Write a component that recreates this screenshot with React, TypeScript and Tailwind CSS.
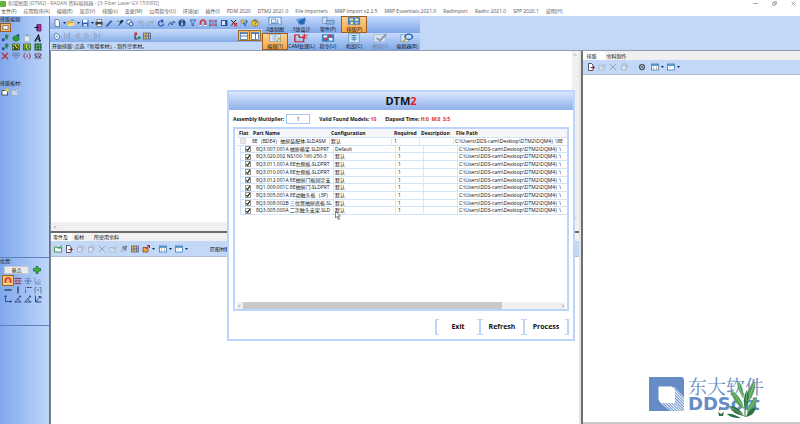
import React from 'react';

const icons: Record<string, React.ReactNode> = {
  file: <path d="M4 1h6l3 4v10H4z" fill="#fff" stroke="#44618f" strokeWidth="1.5" />,
  folder: (
    <>
      <path d="M1 4h5l2 2h6v8H1z" fill="#e9a92d" />
      <path d="M4 8h12l-3 6H1z" fill="#ffdf7d" />
      <path d="M8 3c3-2 5-1 6 1" fill="none" stroke="#3a67b8" strokeWidth="1.5" />
    </>
  ),
  save: (
    <>
      <rect x="2" y="2" width="13" height="13" fill="#3563b3" />
      <rect x="4" y="2" width="9" height="5" fill="#fff" />
      <rect x="5" y="10" width="7" height="5" fill="#c9dcf7" />
    </>
  ),
  print: (
    <>
      <path d="M4 1h9v5H4z" fill="#fff" stroke="#333" />
      <rect x="1" y="6" width="14" height="6" rx="1" fill="#43474f" />
      <path d="M4 10h9v5H4z" fill="#f4f4f4" stroke="#333" />
    </>
  ),
  pencil: <path d="M2 14L12 3l2 2L4 15z" fill="#2f6fc1" stroke="#1d3f7a" />,
  brush: (
    <>
      <path d="M3 15l5-8 3 2z" fill="#1f5bb5" />
      <path d="M7 6c3-5 6-4 8-4-1 4-3 7-6 7z" fill="#2c3440" />
      <path d="M2 4l5 1" stroke="#2fa38c" strokeWidth="2" />
    </>
  ),
  copy: (
    <>
      <path d="M2 2h7l2 2v6H2z" fill="#fff" stroke="#2c5aa8" strokeWidth="1.5" />
      <circle cx="10" cy="10" r="4" fill="#cfe2ff" stroke="#2c5aa8" strokeWidth="2" />
    </>
  ),
  undo: <path d="M4 3v5h5M4 8c4-5 10-3 10 2 0 2-2 4-4 4" fill="none" stroke="#93a4bf" strokeWidth="2" />,
  redo: <path d="M12 3v5H7M12 8C8 3 2 5 2 10c0 2 2 4 4 4" fill="none" stroke="#93a4bf" strokeWidth="2" />,
  refresh: <path d="M13 9a5 5 0 1 1-5-5h3M9 1l3 3-3 3" fill="none" stroke="#1d57b0" strokeWidth="2.4" />,
  curve: <path d="M1 13c3-8 5-8 6-3s3 0 3-5l5 2" fill="none" stroke="#24528f" strokeWidth="2" />,
  info: (
    <>
      <circle cx="8" cy="8" r="7" fill="#1e4e92" />
      <path d="M8 7v6M8 3v2" stroke="#fff" strokeWidth="2.5" />
    </>
  ),
  filter: <path d="M2 2h12l-5 6v6l-3-2V8z" fill="#9dc0f0" stroke="#244f95" strokeWidth="1.5" />,
  magnet: (
    <>
      <path d="M3 13V7a5 5 0 0 1 10 0v6" fill="none" stroke="#d2323c" strokeWidth="3.4" />
      <path d="M1 13h4M11 13h4" stroke="#fff" strokeWidth="2" />
    </>
  ),
  dims: (
    <>
      <path d="M1 4h14M1 12h14" stroke="#d0323c" strokeWidth="2" />
      <path d="M2 1v14M14 1v14M5 8h6" stroke="#1f4e9b" strokeWidth="1.5" />
    </>
  ),
  panel: (
    <>
      <rect x="2" y="2" width="13" height="12" fill="#215ba8" />
      <rect x="4" y="4" width="6" height="8" fill="#d5e7fb" />
    </>
  ),
  figure: (
    <>
      <path d="M2 2l5 5-4 6M7 7l5-5" stroke="#222" strokeWidth="2" fill="none" />
      <path d="M8 8l6 6M14 8l-6 6" stroke="#d4262f" strokeWidth="2.4" />
    </>
  ),
  key: (
    <>
      <circle cx="5" cy="5" r="3.5" fill="#f2c43b" stroke="#7d6415" />
      <path d="M7 8l5 6M11 2l3 3-3 4" stroke="#2b5eb3" strokeWidth="2.5" fill="none" />
    </>
  ),
  help: (
    <>
      <circle cx="8" cy="8" r="7" fill="#f6cf3b" stroke="#6b5c1c" />
      <path d="M5 6c0-4 6-4 6 0 0 2-3 2-3 4M8 11v2" fill="none" stroke="#27488e" strokeWidth="2" />
    </>
  ),
  hand: (
    <>
      <path d="M3 4l3-2 7 5v5l-4 3H6L2 9z" fill="#e6eefb" stroke="#4b6c9f" strokeWidth="1.5" />
      <path d="M5 7l5 4" stroke="#4b6c9f" strokeWidth="1.5" />
    </>
  ),
  first: <path d="M3 2v12M13 2L6 8l7 6z" fill="#a9b9d2" stroke="#8e9fbc" strokeWidth="1.5" />,
  prev: <path d="M12 2L4 8l8 6z" fill="#a9b9d2" stroke="#8e9fbc" />,
  next: <path d="M4 2l8 6-8 6z" fill="#a9b9d2" stroke="#8e9fbc" />,
  last: <path d="M13 2v12M3 2l7 6-7 6z" fill="#a9b9d2" stroke="#8e9fbc" strokeWidth="1.5" />,
  nest: (
    <>
      <path d="M3 1h5v5H3z" fill="#c2272d" />
      <path d="M4 6v8h5" stroke="#222" strokeWidth="2" fill="none" />
      <path d="M9 9h6v5H9z" fill="#2e8b3d" />
    </>
  ),
  grid: (
    <>
      <rect x="1" y="2" width="14" height="12" fill="#f3b94c" stroke="#5a5a70" strokeWidth="1.5" />
      <path d="M6 2v12M11 2v12M1 8h14" stroke="#3a64ab" strokeWidth="1.5" />
    </>
  ),
  rows: (
    <>
      <rect x="1" y="1" width="14" height="14" fill="#fff" stroke="#4d78b4" strokeWidth="1.6" />
      <path d="M1 8h14M1 3h14" stroke="#4d78b4" strokeWidth="2" />
    </>
  ),
  cols: (
    <>
      <rect x="1" y="1" width="14" height="14" fill="#fff" stroke="#4d78b4" strokeWidth="1.6" />
      <path d="M9 1v14M1 3h14" stroke="#4d78b4" strokeWidth="2" />
    </>
  ),
  sheet: <rect x="2" y="4" width="12" height="8" fill="#fff" stroke="#5a6a88" strokeWidth="2" />,
  exit: (
    <>
      <path d="M6 1h8v13H6z" fill="#c026b0" stroke="#3c2440" strokeWidth="1.5" />
      <path d="M1 7h7M5 4l4 3-4 4" stroke="#111" strokeWidth="2" fill="none" />
    </>
  ),
  part: (
    <>
      <path d="M9 2h5v5H9z" fill="#2f9c43" stroke="#24542d" />
      <path d="M2 9h5v5H2z" fill="#2a3f8f" />
      <path d="M7 10l5-2v4" stroke="#2f9c43" strokeWidth="2" fill="none" />
    </>
  ),
  cube: (
    <>
      <path d="M2 6l6-3 6 3v6l-6 3-6-3z" fill="#24a03a" stroke="#135b22" />
      <path d="M9 2l5-1v4" fill="#1d2e8a" stroke="#1d2e8a" />
    </>
  ),
  paste: (
    <>
      <rect x="2" y="2" width="12" height="13" rx="1" fill="#aebdd4" />
      <rect x="4" y="5" width="8" height="9" fill="#e6ecf5" />
      <rect x="5" y="1" width="6" height="3" fill="#8897b0" />
    </>
  ),
  letter: <path d="M2 14L9 2l3 12M5 10h6M1 14h4M9 14h5" fill="none" stroke="#111" strokeWidth="2.2" />,
  array: (
    <>
      <rect x="1" y="2" width="14" height="12" fill="#d5dd3a" stroke="#2c4a22" strokeWidth="1.5" />
      <path d="M3 5l4 5M9 4l4 5M3 12h10" stroke="#17351d" strokeWidth="2.6" />
    </>
  ),
  array2: (
    <>
      <rect x="1" y="2" width="14" height="12" fill="#d5dd3a" stroke="#2c4a22" strokeWidth="1.5" />
      <path d="M4 4v8h4M12 4L9 7l4 5" stroke="#1b6f35" strokeWidth="2.6" fill="none" />
    </>
  ),
  mesh: (
    <>
      <rect x="1" y="1" width="14" height="14" fill="#145226" />
      <path d="M1 5.5h14M1 10.5h14M5.5 1v14M10.5 1v14" stroke="#8ed39c" strokeWidth="1.2" />
    </>
  ),
  cross: <path d="M2 2l12 12M14 2L2 14" stroke="#c1272d" strokeWidth="2.4" />,
  link: (
    <g fill="none" stroke="#5f7191" strokeWidth="1.8">
      <circle cx="4" cy="5" r="3" />
      <circle cx="12" cy="5" r="3" />
      <path d="M5 9l3 4 3-4" />
    </g>
  ),
  rotate: (
    <g fill="none" strokeWidth="2">
      <path d="M5 2a7 7 0 0 0 0 12" stroke="#c1272d" />
      <path d="M11 14a7 7 0 0 0 0-12" stroke="#c1272d" />
      <path d="M8 5v6" stroke="#1d3b87" strokeDasharray="2 1" />
    </g>
  ),
  mirror: (
    <g fill="none" strokeWidth="1.6">
      <path d="M8 1v14" stroke="#c1272d" />
      <path d="M6 4H2v4h3v4H1M10 4h4v4h-3v4h4" stroke="#2d3e62" />
    </g>
  ),
  newSheet: (
    <>
      <rect x="2" y="5" width="11" height="9" fill="#fff" stroke="#4c5c78" strokeWidth="2" />
      <path d="M12 1v7M8 4h8" stroke="#e7d22c" strokeWidth="3" />
    </>
  ),
  graySheet: (
    <>
      <rect x="2" y="5" width="11" height="9" fill="#dde5f0" stroke="#a3b2c8" strokeWidth="1.5" />
      <path d="M6 9l7-7 2 2-6 7" fill="#c6d1e1" stroke="#9aabc4" />
    </>
  ),
  plus: <path d="M6 1h4v4h5v5h-5v5H6v-5H1V5h5z" fill="#3bb44c" stroke="#176a2a" strokeWidth="1.5" />,
  snapGrid: (
    <>
      <path d="M1 3h14M1 8h14M1 13h14" stroke="#b3373f" strokeWidth="2" />
      <path d="M4 1v14M10 1v14" stroke="#6d4f80" strokeWidth="1.2" />
    </>
  ),
  snapCross: <path d="M8 1v14M1 8h14M3 3h2M11 3h2M3 13h2M11 13h2" stroke="#3f5f9d" strokeWidth="1.6" />,
  snapAngle: <path d="M2 1v13h13M4 12L13 3M6 13l8-5" stroke="#6c84b0" strokeWidth="1.4" fill="none" />,
  hline: <path d="M1 8h14" stroke="#1d2b4a" strokeWidth="2.4" />,
  vline: <path d="M8 1v14" stroke="#1d2b4a" strokeWidth="2.4" />,
  corner: (
    <>
      <path d="M6 3h9" stroke="#26354f" strokeWidth="1.8" strokeDasharray="4 1" />
      <path d="M3 2v3M3 7v7" stroke="#2b9c40" strokeWidth="2" />
    </>
  ),
  brackets: (
    <>
      <path d="M5 3H2v12M11 3h3v12" stroke="#516489" strokeWidth="1.6" fill="none" />
      <path d="M8 6v4" stroke="#2b9c40" strokeWidth="2.4" />
    </>
  ),
  axis: <path d="M3 1v12h12M1 4l2-3 2 3M12 11l3 2-3 2" stroke="#23407c" strokeWidth="1.7" fill="none" />,
  angle: <path d="M1 14h14M2 14L12 2M8 7l4 7M10 2h3v3" stroke="#23407c" strokeWidth="1.7" fill="none" />,
  angle2: <path d="M3 1v13h12M3 14L13 3M9 3h5v4" stroke="#23407c" strokeWidth="1.9" fill="none" />,
  addPart: (
    <>
      <path d="M1 4h5l1 2h8v8H1z" fill="#fff" stroke="#32884a" strokeWidth="1.8" />
      <path d="M8 5h6V1" stroke="#3aa655" strokeWidth="2.5" fill="none" />
    </>
  ),
  exportDoc: (
    <>
      <path d="M3 1h6l3 3v11H3z" fill="#fff" stroke="#2e3440" strokeWidth="1.6" />
      <path d="M7 9h8M12 6l3 3-3 3" stroke="#a61c28" strokeWidth="2" fill="none" />
    </>
  ),
  grayDoc: <path d="M3 5h9v9H3zM5 2h9v8" fill="#dbe3ee" stroke="#9eacc0" strokeWidth="1.6" />,
  grayX: <path d="M2 2l12 12M14 2L2 14" stroke="#98a3b4" strokeWidth="2" />,
  pin: <path d="M2 14l4-5M5 6l6 6 2-8 1-2-8 1z" fill="#8490a3" stroke="#707c90" strokeWidth="1.5" />,
  bucket: (
    <>
      <path d="M2 5h10v9H2z" fill="#efa73c" stroke="#694319" strokeWidth="1.5" />
      <path d="M8 8l6-6M10 1h5v5" stroke="#b2222b" strokeWidth="2" fill="none" />
    </>
  ),
  table: (
    <>
      <rect x="1" y="2" width="14" height="12" fill="#fff" stroke="#3980bd" strokeWidth="1.6" />
      <path d="M1 4h14" stroke="#3980bd" strokeWidth="3" />
      <path d="M5 7v5M11 7v5" stroke="#d9853c" strokeWidth="1.8" strokeDasharray="2 1" />
    </>
  ),
  windowPane: (
    <>
      <rect x="1" y="2" width="14" height="12" fill="#fff" stroke="#3980bd" strokeWidth="1.6" />
      <path d="M1 4h14" stroke="#3980bd" strokeWidth="3" />
      <path d="M4 8h3" stroke="#7a9cc0" strokeWidth="1.5" />
    </>
  ),
  gear: (
    <>
      <circle cx="8" cy="8" r="5" fill="#cdd6e6" stroke="#4b5468" strokeWidth="2.5" />
      <path d="M4 4l8 8M12 4l-8 8" stroke="#4b5468" strokeWidth="1.3" />
    </>
  ),
  drawing: (
    <>
      <rect x="1" y="2" width="14" height="12" fill="#eaf4ff" stroke="#5a90c0" strokeWidth="1.2" />
      <path d="M4 5h5v6H4zM11 5v7M3 12h10" fill="none" stroke="#4a86bb" />
    </>
  ),
  model: (
    <>
      <path d="M1 6l7-3 7 4-7 4z" fill="#5aa0de" />
      <path d="M4 9l9-7-1 11-5 1z" fill="#2a68b1" />
    </>
  ),
  plates: (
    <>
      <path d="M2 2h5v10H2z" fill="#d5e5f5" stroke="#6c91bb" />
      <path d="M6 7h9v6H6z" fill="#8fb7e2" stroke="#4d7dae" />
    </>
  ),
  nesting: (
    <>
      <rect x="1" y="2" width="14" height="12" fill="#3c82c4" />
      <path d="M3 4h4v3H3zM9 4h4v4H9zM4 9h3v4H4zM9 10h4v2H9z" fill="#f3e2a0" />
    </>
  ),
  edit: (
    <>
      <rect x="2" y="2" width="12" height="12" fill="#f7fbff" stroke="#7095b9" />
      <path d="M4 5h8M4 8h8M4 11h5M8 3v10" stroke="#7aa6cf" />
      <path d="M10 13l4-6" stroke="#d7a430" strokeWidth="2" />
    </>
  ),
  cam: (
    <>
      <path d="M1 14V3h5v4h5v7z" fill="none" stroke="#cc2630" strokeWidth="1.6" />
      <path d="M9 6l7-3M10 2l5 7M12 1v9" stroke="#cc2630" strokeWidth="1.1" />
    </>
  ),
  order: (
    <>
      <rect x="1" y="2" width="14" height="12" fill="#3c82c4" />
      <path d="M3 4h4v3H3zM9 8h4v4H9z" fill="#fff" />
      <path d="M8 4l4 2M4 12l3-4" stroke="#e03038" strokeWidth="2.4" />
    </>
  ),
  machine: (
    <>
      <rect x="2" y="1" width="12" height="14" fill="#cfe6f8" stroke="#6d9cc4" />
      <path d="M5 4h6M5 7h6M5 10h6M8 3v10" stroke="#4c8abc" strokeWidth="1.3" />
    </>
  ),
  check: (
    <>
      <rect x="1" y="2" width="13" height="12" fill="#dae3ef" stroke="#a8b6ca" />
      <path d="M4 8l4 4 7-10" stroke="#8796ad" strokeWidth="2.4" fill="none" />
    </>
  ),
  search: (
    <>
      <rect x="1" y="3" width="9" height="11" fill="#d6e8fb" stroke="#7299c4" />
      <circle cx="10" cy="6" r="4.2" fill="#bfe2ff" stroke="#2561aa" strokeWidth="1.8" />
      <path d="M7 9l-4 5" stroke="#d9a62c" strokeWidth="2.4" />
    </>
  ),
};

const Icon: React.FC<{ name: string; className?: string }> = ({ name, className = 'size-2' }) => (
  <svg viewBox="0 0 16 16" preserveAspectRatio="none" aria-hidden="true" className={`shrink-0 ${className}`}>
    {icons[name]}
  </svg>
);

const Caret = () => (
  <svg viewBox="0 0 6 4" aria-hidden="true" className="w-[3px] h-[2px] shrink-0">
    <path d="M0 0h6L3 4z" fill="#1b2a49" />
  </svg>
);

const ToolButton: React.FC<{ name: string; active?: boolean; caret?: boolean }> = ({ name, active, caret }) => (
  <button
    aria-label={name}
    className={`flex items-center justify-center h-[9px] shrink-0 ${caret ? 'gap-[2px] w-[14px]' : 'w-[10px]'} ${
      active ? 'bg-[#fbc066] outline outline-1 outline-[#9a6a2b]' : ''
    }`}
  >
    <Icon name={name} />
    {caret && <Caret />}
  </button>
);

const menus = [
  '文件(F)', '应用程序(A)', '编辑(E)', '显示(V)', '排版(s)', '变更(M)', '公用指令(U)', '环境(g)', '插件(I)',
  'PDM 2020', 'DTM2 2021.0', 'File Importers', 'MRP Import v2.2.5', 'MRP Essentials 2021.0', 'Radimport',
  'Radnc 2021.0', 'SPP 2020.1', '说明(H)',
];

const mainTools = [
  'print', 'pencil', 'brush', 'copy', 'undo', 'redo', 'refresh', 'curve', 'info', 'filter', 'magnet',
  'dims', 'panel', 'figure', 'key', 'help',
];

const modes = [
  [
    { icon: 'drawing', label: '2维制图' },
    { icon: 'model', label: '3维设计' },
    { icon: 'plates', label: '零件(P)' },
    { icon: 'nesting', label: '排版(P)', active: true },
  ],
  [
    { icon: 'edit', label: '编辑(1)', active: true },
    { icon: 'cam', label: 'CAM处理(L)' },
    { icon: 'order', label: '指令(U)' },
    { icon: 'machine', label: '机组(C)' },
    { icon: 'check', label: '模拟(V)', disabled: true },
    { icon: 'search', label: '编辑器(B)' },
  ],
];

const editTools = ['part', 'cube', 'paste', 'letter', 'part', 'array', 'array2', 'mesh', 'cross', 'link', 'rotate', 'mirror'];
const snapTools = ['magnet', 'snapGrid', 'snapCross', 'snapAngle', 'hline', 'vline', 'corner', 'brackets', 'axis', 'angle', 'angle', 'angle2'];
const partTools = ['addPart', 'exportDoc', 'grayDoc', 'grayDoc', 'grayX', 'graySheet', 'pin', 'grid'];

const parts = [
  { name: '8Q3.007.001A 抽屉横梁.SLDPRT', config: 'Default' },
  { name: '8Q3.020.002 NS100-160-250-3', config: '默认' },
  { name: '8Q3.011.001A 8E右侧板.SLDPRT', config: '默认' },
  { name: '8Q3.010.001A 8E左侧板.SLDPRT', config: '默认' },
  { name: '8Q3.012.001A 8E抽屉门板固定支', config: '默认' },
  { name: '8Q1.009.001C 8E抽屉门.SLDPRT', config: '默认' },
  { name: '8Q3.005.001A 8E动触头板（3P）', config: '默认' },
  { name: '8Q3.008.002B 三位置抽屉底板.SL', config: '默认' },
  { name: '8Q3.005.000A 二次触头支架.SLD', config: '默认' },
];

const TitleBar = () => (
  <header className="bg-white shrink-0">
    <div className="flex items-center justify-between h-[7px] pr-1">
      <div className="flex items-center gap-[2px] text-[5px] leading-[7px] text-[#777]">
        <span className="size-[6px] bg-[#63b33b] rounded-[1px]" />
        <h1>新增图面 (DTM2) - RADAN 资料编辑器 - [3: Fiber Laser GY-1530FD]</h1>
      </div>
      <div className="flex items-center gap-[14px]">
        {['M0 4h8', 'M1 3h4v4H1zM3 3V1h4v4H5', 'M1 1l6 6M7 1L1 7'].map((d, i) => (
          <button key={d} aria-label={['Minimize', 'Restore', 'Close'][i]}>
            <svg viewBox="0 0 8 8" className="block size-[5px]">
              <path d={d} fill="none" stroke="#777" strokeWidth="1" />
            </svg>
          </button>
        ))}
      </div>
    </div>
    <nav className="flex items-center gap-[7px] h-[9px] pl-px text-[5px] leading-[9px] text-[#555] whitespace-nowrap">
      {menus.map((m) => (
        <button key={m}>{m}</button>
      ))}
    </nav>
  </header>
);

const Toolbars = () => (
  <div className="flex h-[34px] shrink-0 bg-[#c3d7f7]">
    <div className="w-[212px] flex flex-col">
      <div className="flex items-center h-[13px] pl-[2px] bg-linear-to-b from-[#c9dcfa] to-[#86ade9]">
        <ToolButton name="file" caret />
        <ToolButton name="folder" caret />
        <ToolButton name="save" caret />
        <div className="flex flex-1 justify-between pr-[2px]">
          {mainTools.map((t) => (
            <ToolButton key={t} name={t} />
          ))}
        </div>
      </div>
      <div className="flex items-center h-[13px] px-[2px] bg-linear-to-b from-[#c9dcfa] to-[#86ade9]">
        {['hand', 'first', 'prev', 'next', 'last'].map((t) => (
          <ToolButton key={t} name={t} />
        ))}
        <div className="flex ml-[30px]">
          <ToolButton name="nest" />
          <ToolButton name="grid" />
        </div>
        <div className="flex gap-px ml-auto">
          <ToolButton name="rows" active />
          <ToolButton name="cols" active />
        </div>
      </div>
      <p className="h-2 pl-[2px] text-[5px] leading-[8px] text-[#111] whitespace-nowrap">
        开始排版: 点选「新增素材」, 制作空素材。
      </p>
    </div>
    <div className="w-[158px] flex flex-col">
      {modes.map((row, i) => (
        <div key={i} className="grid grid-cols-6 h-[17px] bg-linear-to-b from-[#c6dafb] to-[#7ea7e8]">
          {row.map((m) => (
            <button
              key={m.label}
              disabled={m.disabled}
              className={`flex flex-col items-center text-[5px] leading-[6px] whitespace-nowrap ${
                m.active ? 'bg-linear-to-b from-[#fdd493] to-[#f6a342] outline outline-1 -outline-offset-1 outline-[#9a5f24]' : ''
              } ${m.disabled ? 'text-[#6f7f99]' : 'text-[#111]'}`}
            >
              <Icon name={m.icon} className="w-[14px] h-[10px]" />
              {m.label}
            </button>
          ))}
        </div>
      ))}
    </div>
  </div>
);

const LeftBar = () => (
  <aside className="w-[50px] shrink-0 flex flex-col border-r border-[#5f7391] bg-linear-to-r from-[#7fa8ec] to-[#c0d6fa] text-[5px] leading-[7px] text-[#111]">
    <section className="h-16">
      <h2>排版编辑:</h2>
      <div className="flex justify-between pr-[6px] mb-px">
        <button aria-label="sheet" className="flex items-center justify-center w-[11px] h-[9px] bg-[#fbb95c] border border-[#9a5f24]">
          <Icon name="sheet" className="size-[7px]" />
        </button>
        <ToolButton name="exit" />
      </div>
      <div className="grid grid-cols-4 w-11">
        {editTools.map((t, i) => (
          <ToolButton key={i} name={t} />
        ))}
      </div>
    </section>
    <section className="flex-1">
      <h2>排版板材:</h2>
      <div className="flex">
        <ToolButton name="newSheet" />
        <ToolButton name="graySheet" />
      </div>
    </section>
    <section className="h-[69px] border-y border-[#5c81bf]">
      <h2>位置:</h2>
      <div className="flex items-center justify-between pl-1 pr-[7px] mb-[2px]">
        <button className="w-[25px] h-2 bg-[#e9eaec] border border-[#c3c8d0] leading-[6px]">基点</button>
        <ToolButton name="plus" />
      </div>
      <div className="grid grid-cols-4 w-10 ml-[3px]">
        {snapTools.map((t, i) => (
          <ToolButton key={i} name={t} active={i === 0} />
        ))}
      </div>
    </section>
    <div className="h-[98px]" />
  </aside>
);

const Scroller: React.FC<{ d: string }> = ({ d }) => (
  <svg viewBox="0 0 6 6" aria-hidden="true" className="size-1 shrink-0">
    <path d={d} fill="none" stroke="#8a8a8a" strokeWidth="1.2" />
  </svg>
);

const Workspace = () => (
  <main className="flex-1 min-w-0 flex flex-col border-l border-[#7b8798]">
    <div className="flex h-[171px] shrink-0">
      <div className="flex-1 bg-white" />
      <div className="w-[7px] flex flex-col items-center justify-between py-[2px] bg-[#f0f0f0]">
        <Scroller d="M1 4l2-2 2 2" />
        <Scroller d="M1 2l2 2 2-2" />
      </div>
    </div>
    <div className="flex items-center h-[9px] pl-[2px] bg-[#f0f0f0] shrink-0">
      <Scroller d="M4 1L2 3l2 2" />
    </div>
    <div className="flex items-end h-[10px] border-t-2 border-[#6a6a6a] bg-[#f0f0f0] text-[5px] leading-[8px] text-[#111] shrink-0" role="tablist">
      <button role="tab" aria-selected="true" className="px-[2px] w-[21px] text-left bg-white whitespace-nowrap">零件及</button>
      <button role="tab" className="w-5 text-left pl-[2px]">板材</button>
      <button role="tab" className="px-[2px]">所使用余料</button>
    </div>
    <div className="flex items-center h-4 pl-[2px] bg-[#c3d7f7] border-b border-[#b3c0d4] shrink-0">
      <div className="flex gap-px mr-px">
        {partTools.map((t, i) => (
          <ToolButton key={i} name={t} />
        ))}
      </div>
      <div className="flex">
        <ToolButton name="bucket" caret />
        <div className="flex gap-[2px] ml-[3px]">
          <ToolButton name="table" caret />
          <ToolButton name="windowPane" caret />
        </div>
      </div>
      <span className="ml-[22px] text-[5px] leading-[8px] text-[#111]">匹配材料</span>
    </div>
    <div className="flex-1 bg-white" />
  </main>
);

const Watermark = () => (
  <div className="flex items-center gap-1 text-[#668cc6]">
    <svg viewBox="0 0 70 68" className="w-[35px] h-[34px]">
      <defs>
        <pattern id="hatch" width="4" height="4" patternUnits="userSpaceOnUse" patternTransform="rotate(-45)">
          <rect width="2" height="4" fill="#fff" />
        </pattern>
      </defs>
      <path d="M0 0h64q6 0 6 6v62H0z" fill="#668cc6" />
      <path d="M50 20l20 20v28H42L20 50z" fill="url(#hatch)" />
      <path d="M19 19h26q6 2 7 8v25H27q-7-2-8-8z" fill="#fff" />
    </svg>
    <div className="relative">
      <p className="font-['Noto_Serif_CJK_SC','Liberation_Serif','Noto_Sans_CJK_SC',serif] text-[19px] leading-[20px]">东大软件</p>
      <p className="font-['DejaVu_Sans',sans-serif] font-bold text-[18px] leading-[16px]">DDSoft</p>
      <svg viewBox="0 0 90 78" aria-hidden="true" className="absolute right-1 -bottom-[6px] w-[45px] h-[39px]">
        <g fill="#55a05c">
          <path d="M58 60C54 42 46 30 32 22c2 16 10 30 26 38z" />
          <path d="M57 40C48 26 44 14 44 2c10 8 14 22 13 38z" />
          <path d="M64 48C62 30 68 14 80 4c2 16-4 32-16 44z" />
          <path d="M64 68c2-16 8-26 20-32 0 14-8 26-20 32z" />
        </g>
        <g fill="#2c7142">
          <path d="M58 74C50 60 40 54 28 54c6 12 16 18 30 20z" />
          <path d="M60 60c-4-16-2-28 4-38 6 12 4 26-4 38z" />
          <path d="M62 76c4-12 10-18 20-20-2 12-10 18-20 20z" />
          <path d="M52 78C42 74 36 68 24 70c6 6 16 9 28 8z" />
          <path d="M6 66l6 4 6-4-2 8H8zM8 58l4 3-4 2z" />
        </g>
        <path d="M34 24l22 32M46 6l10 32M79 8L66 44M64 26l-3 30M82 40L66 64M30 56l26 16" stroke="#a9d39a" strokeWidth="1.2" fill="none" />
        <path d="M60 76V42" stroke="#2c7142" strokeWidth="2" />
      </svg>
    </div>
  </div>
);

const RightPane = () => (
  <aside className="w-[29%] shrink-0 flex flex-col bg-white border-b-2 border-[#c8c8c8]">
    <div className="flex items-end h-[9px] bg-[#f0f0f0] text-[5px] leading-[8px] text-[#111]" role="tablist">
      <button role="tab" aria-selected="true" className="w-[22px] h-full pl-1 text-left bg-white">排版</button>
      <button role="tab" className="px-[2px]">余料制作</button>
    </div>
    <div className="flex items-center h-[15px] pl-[3px] bg-[#c3d7f7] border-b border-[#b3c0d4]">
      <div className="flex gap-px">
        <ToolButton name="exportDoc" />
        <ToolButton name="graySheet" />
        <ToolButton name="grayX" />
        <ToolButton name="grayDoc" />
      </div>
      <div className="flex gap-[2px] ml-2">
        <ToolButton name="gear" />
        <div className="flex gap-[2px] ml-[2px]">
          <ToolButton name="table" caret />
          <ToolButton name="windowPane" caret />
        </div>
      </div>
    </div>
    <div className="flex-1 flex items-end justify-end pr-9 pb-[10px]">
      <Watermark />
    </div>
  </aside>
);

const cell = 'shrink-0 overflow-hidden border-r border-[#dbe8f5]';

const PartRow: React.FC<{ name: string; config: string; parent?: boolean }> = ({ name, config, parent }) => (
  <tr className={`flex flex-1 min-h-0 items-stretch border-b border-[#d3e4f5] ${parent ? '' : 'ml-[3px] border-l'}`}>
    <td className={`w-[14px] flex items-center justify-center shrink-0 ${parent ? 'pr-[2px]' : ''}`}>
      <input
        type="checkbox"
        aria-label={name}
        defaultChecked={!parent}
        disabled={parent}
        className="peer appearance-none size-[6px] border border-[#999] bg-white disabled:border-[#ddd] disabled:bg-[#e6e6e6]"
      />
      <svg viewBox="0 0 8 8" aria-hidden="true" className="hidden peer-checked:block size-[6px] -ml-[6px] pointer-events-none">
        <path d="M1.5 4l2 2 3-4.500" fill="none" stroke="#111" strokeWidth="1.4" />
      </svg>
    </td>
    <td className={`w-[79px] pl-px ${cell}`}>{name}</td>
    <td className={`w-[62px] pl-px ${cell}`}>{config}</td>
    <td className={`w-7 pl-[2px] ${cell}`}>1</td>
    <td className={`w-[34px] ${cell}`} />
    <td className="pl-px whitespace-pre">
      {'C:\\Users\\DDS-cam\\Desktop\\DTM2\\DQM4)  \\'}
      {parent && '8E'}
    </td>
  </tr>
);

const DialogButton: React.FC<{ label: string }> = ({ label }) => (
  <button className="flex justify-between items-center w-[46px] h-4 -ml-[2px] text-[7px] font-bold text-[#111]">
    <span className="w-1 h-full border-y border-l-2 border-[#bdd5fa]" />
    {label}
    <span className="w-1 h-full border-y border-r-2 border-[#bdd5fa]" />
  </button>
);

const DtmDialog = () => (
  <div className="absolute inset-0 flex items-center justify-center pt-[7px] pl-[2px]">
    <section role="dialog" aria-labelledby="dtm-title" className="relative w-[348px] bg-white border-2 border-[#bdd5fa] text-[#111]">
      <h2 id="dtm-title" className="h-[18px] text-center text-[11px] leading-[17px] font-bold bg-linear-to-b from-[#d9e6fb] to-[#8fb0e9]">
        DTM<span className="text-[#f01c24]">2</span>
      </h2>
      <div className="text-[5px]">
        <div className="flex items-center gap-[9px] h-[17px] pl-1 leading-[8px] font-bold whitespace-nowrap">
          <div className="flex items-center gap-[2px]">
            <label htmlFor="multiplier">Assembly Multiplier:</label>
            <input id="multiplier" defaultValue="1" className="w-6 h-[10px] border border-[#a9c9f5] text-center font-normal" />
          </div>
          <span>
            Valid Found Models: <span className="text-[#e0262c]">10</span>
          </span>
          <span className="whitespace-pre">
            Elapsed Time: <span className="text-[#e0262c]">H:0  M:0  S:5</span>
          </span>
        </div>
        <div className="flex flex-col h-[184px] mx-1 border-2 border-[#bdd5fa] overflow-hidden">
          <table className="block flex-1 pl-[2px] leading-[6px] whitespace-nowrap overflow-hidden text-[#111]">
            <thead className="block">
              <tr className="flex items-center h-[9px] bg-[#f5f7fa] text-left border-b border-[#d3e4f5]">
                <th className="w-[14px] pl-[2px]">Flat</th>
                <th className="w-[79px] pl-[2px]">Part Name</th>
                <th className="w-[62px] pl-px">Configuration</th>
                <th className="w-7 pl-[2px]">Required</th>
                <th className="w-[34px] pl-px">Description</th>
                <th className="pl-[2px]">File Path</th>
              </tr>
            </thead>
            <tbody className="flex flex-col h-[77px]">
              <PartRow name="8E（BDE4）抽屉装配体.SLDASM" config="默认" parent />
              {parts.map((p) => (
                <PartRow key={p.name} name={p.name} config={p.config} />
              ))}
            </tbody>
          </table>
          <div className="flex items-center gap-[2px] h-[7px] mx-[2px] bg-[#f0f0f0]">
            <Scroller d="M4 1L2 3l2 2" />
            <div className="flex-1 h-full">
              <div className="w-[82%] h-full bg-[#c9c9c9]" />
            </div>
            <Scroller d="M2 1l2 2-2 2" />
          </div>
        </div>
      </div>
      <div className="flex justify-end h-[28px] pt-2 pr-1">
        <DialogButton label="Exit" />
        <DialogButton label="Refresh" />
        <DialogButton label="Process" />
      </div>
      <svg viewBox="0 0 12 18" aria-hidden="true" className="absolute left-[106px] top-[119px] w-[6px] h-[9px]">
        <path d="M1 1v13l3-3 3 6 2-1-3-6h5z" fill="#fff" stroke="#333" strokeWidth="1.2" />
      </svg>
    </section>
  </div>
);

export default function App() {
  return (
    <div className="relative flex flex-col h-screen overflow-hidden bg-white font-['Open_Sans','Noto_Sans_CJK_SC',sans-serif]">
      <TitleBar />
      <div className="flex flex-1 min-h-0">
        <LeftBar />
        <div className="flex-1 min-w-0 flex flex-col">
          <Toolbars />
          <div className="flex flex-1 min-h-0 border-t border-[#8f9bb0]">
            <Workspace />
            <div className="w-1 shrink-0 bg-[#e4e4e4] border-r-2 border-[#6f6f6f]" />
            <RightPane />
          </div>
        </div>
      </div>
      <DtmDialog />
    </div>
  );
}
